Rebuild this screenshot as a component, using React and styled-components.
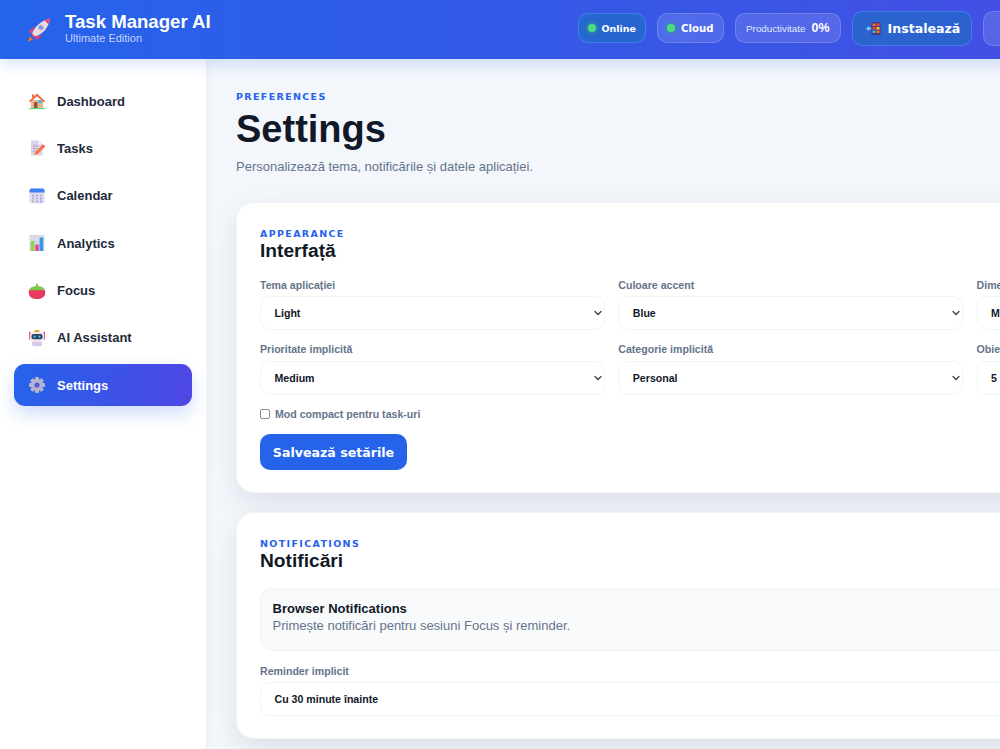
import React from "react";
import styled, { createGlobalStyle } from "styled-components";
import { ChevronDown } from "lucide-react";

const Global = createGlobalStyle`
  html, body { margin: 0; padding: 0; height: 749px; overflow: hidden; background: #f3f6fb; }
  * { box-sizing: border-box; }
  #root { font-family: "Liberation Sans", Arial, sans-serif; }
`;
const Shell = styled.div`width: 1400px; height: 749px; display: flex; flex-direction: column; overflow: hidden; background: #f3f6fb;`;
const Header = styled.header`
  height: 59px; flex: none; display: flex; align-items: center; padding: 0 24px 0 26px;
  background: linear-gradient(90deg,#2563eb 0%,#3b55e6 55%,#4f46e5 100%);
  box-shadow: 0 4px 16px rgba(37,99,235,.2); position: relative; z-index: 2;
`;
const Brand = styled.div`display: flex; align-items: center; gap: 13px; width: 552px; flex: none;`;
const BrandText = styled.div`display: flex; flex-direction: column; color: #fff;`;
const BrandTitle = styled.div`font: 700 18.6px/20px "Liberation Sans", Arial, sans-serif; white-space: nowrap; margin-top: -3px;`;
const BrandSub = styled.div`font: 400 11px/13px "Liberation Sans", Arial, sans-serif; color: #c7d2fe;`;
const Actions = styled.div`display: flex; align-items: center; gap: 11px; margin-bottom: 3px;`;
const Pill = styled.div`
  height: 30px; display: flex; align-items: center; gap: 6px; padding: 0 ${p => p.$pad || 8.5}px; border-radius: 10px; color: #fff; flex: none;
  background: ${p => p.$teal ? "rgba(20,120,180,.45)" : "rgba(255,255,255,.12)"};
  border: 1px solid ${p => p.$teal ? "rgba(96,165,250,.45)" : "rgba(255,255,255,.16)"};
`;
const Dot = styled.span`width: 8px; height: 8px; border-radius: 50%; background: #4ade80; box-shadow: 0 0 4px #22c55e;`;
const PillText = styled.span`font: 700 ${p => p.$size || 9.5}px "DejaVu Sans", sans-serif; white-space: nowrap;`;
const ProdLabel = styled.span`font: 400 9.8px "Liberation Sans", Arial, sans-serif; color: #e0e7ff; white-space: nowrap;`;
const ProdValue = styled.span`font: 700 12.5px "Liberation Sans", Arial, sans-serif;`;
const InstallBtn = styled(Pill)`height: 35px; padding: 0 11px 0 13px; gap: 7px;`;
const Ghost = styled(Pill)`width: 60px; height: 35px;`;
const Body = styled.div`display: flex; flex: 1; min-height: 0;`;
const Sidebar = styled.aside`
  width: 207px; flex: none; background: #fff; padding: 21px 14px; display: flex; flex-direction: column; gap: 5.4px;
  border-right: 1px solid #eef2f7; box-shadow: 2px 0 10px rgba(15,23,42,.03);
`;
const NavItem = styled.div`
  height: 42px; display: flex; align-items: center; gap: 11px; padding: 0 14px; border-radius: 11px;
  font: 700 13px "Liberation Sans", Arial, sans-serif; color: ${p => p.$active ? "#fff" : "#1e293b"};
  background: ${p => p.$active ? "linear-gradient(100deg,#2563eb,#4f46e5)" : "transparent"};
  box-shadow: ${p => p.$active ? "0 8px 18px rgba(37,99,235,.22)" : "none"};
`;
const Main = styled.main`flex: 1; padding: 32px 30px 0 29px; min-width: 0;`;
const Eyebrow = styled.div`font: 700 9.5px/11px "DejaVu Sans", sans-serif; letter-spacing: 1.35px; color: #2563eb; text-transform: uppercase;`;
const PageTitle = styled.h1`margin: 4px 0 0; font: 700 38px/46px "Liberation Sans", Arial, sans-serif; color: #111827;`;
const PageSub = styled.p`margin: 6px 0 0; font: 400 13px/18px "Liberation Sans", Arial, sans-serif; color: #64748b;`;
const Card = styled.section`
  background: #fff; border-radius: 18px; padding: 24.5px 23px 22px; margin-top: ${p => p.$mt}px;
  box-shadow: 0 10px 28px rgba(15,23,42,.09); border: 1px solid #f1f5f9;
`;
const CardTitle = styled.h2`margin: 0; font: 700 19.2px/24px "Liberation Sans", Arial, sans-serif; color: #111827;`;
const Grid = styled.div`display: grid; grid-template-columns: repeat(3, 345px); column-gap: 13.3px; row-gap: 12px; margin-top: 15px;`;
const Field = styled.label`display: flex; flex-direction: column; gap: 4.5px;`;
const Label = styled.span`font: 700 10.6px/14px "Liberation Sans", Arial, sans-serif; color: #64748b; white-space: nowrap;`;
const Select = styled.div`
  height: 34px; border-radius: 10px; border: 1px solid #f1f5f9; background: #fff; display: flex; align-items: center; justify-content: space-between;
  padding: 0 0 0 13.5px; font: 700 10.6px "Liberation Sans", Arial, sans-serif; color: #111827; white-space: nowrap;
`;
const CheckRow = styled.div`display: flex; align-items: center; gap: 5px; margin-top: 12.5px; font: 700 10.6px/14px "Liberation Sans", Arial, sans-serif; color: #64748b;`;
const Box = styled.span`width: 10px; height: 10px; border: 1px solid #8b8f96; border-radius: 2px; background: #fff;`;
const SaveBtn = styled.button`
  display: block; margin-top: 13px; width: 147px; height: 36px; border: 0; border-radius: 10px; background: #2563eb; color: #fff;
  font: 700 12.6px "DejaVu Sans", sans-serif;
`;
const Notice = styled.div`margin-top: 15px; height: 63px; border-radius: 12px; background: #f8fafc; border: 1px solid #f1f5f9; padding: 12px 11.5px;`;
const NoticeTitle = styled.div`font: 700 13px/16px "Liberation Sans", Arial, sans-serif; color: #111827;`;
const NoticeSub = styled.div`font: 400 13px/18px "Liberation Sans", Arial, sans-serif; color: #64748b;`;
const FullField = styled(Field)`margin-top: 13px;`;

const Rocket = () => (
  <svg width="26" height="26" viewBox="0 0 26 26">
    <path d="M4 19.5L1.5 24.5l5.5-1.8z" fill="#f97316" />
    <path d="M8 9.5L2.5 15.5l4 .5zM16.5 18l-6.5 5.5-.5-4z" fill="#f43f5e" />
    <path d="M6 17C8 10 15 3.5 24 1.5c-1 9-7.5 16-15 18z" fill="#e9dcdf" />
    <path d="M18.5 3.3L24 1.5c-.3 2-1 4-1.7 5.8z" fill="#f43f5e" />
    <circle cx="15" cy="10.5" r="2.5" fill="#60a5fa" stroke="#f1a9b5" />
    <path d="M6 16.5l3.5 3.5-2 .5-2-2z" fill="#f43f5e" />
  </svg>
);
const PhoneArrow = () => (
  <svg width="15" height="15" viewBox="0 0 15 15">
    <path d="M0 7.5L3 5v1.5h2v2H3V10z" fill="#7dd3fc" />
    <rect x="5.5" y="1" width="9" height="13" rx="1" fill="#4c3a78" />
    <rect x="6.5" y="2.5" width="3" height="2.5" fill="#f97316" />
    <rect x="10.5" y="2.5" width="3" height="2.5" fill="#ef4444" />
    <rect x="6.5" y="6" width="3" height="2.5" fill="#ef4444" />
    <rect x="10.5" y="6" width="3" height="2.5" fill="#facc15" />
    <rect x="6.5" y="9.5" width="3" height="2.5" fill="#38bdf8" />
    <rect x="10.5" y="9.5" width="3" height="2.5" fill="#f97316" />
  </svg>
);
const House = () => (
  <svg width="18" height="18" viewBox="0 0 18 18">
    <path d="M3 8h12v8H3z" fill="#e8b48a" />
    <path d="M.8 9.2L9 1.5l8.2 7.7-1.5 1L9 4.3 2.3 10.2z" fill="#ef6b3f" />
    <path d="M4 2.5h2v2l-2 1.8z" fill="#ef6b3f" />
    <rect x="6" y="10" width="3.4" height="6" fill="#8d5a3c" />
    <rect x="10.5" y="8" width="3.2" height="3.2" fill="#38bdf8" />
    <path d="M1 16.6h16" stroke="#4ade80" strokeWidth="1.1" />
  </svg>
);
const Memo = () => (
  <svg width="18" height="18" viewBox="0 0 18 18">
    <path d="M3 1.5h7.5l4 4V16.5H3z" fill="#ddd3e6" />
    <path d="M10.5 1.5v4h4z" fill="#f3eef6" />
    <path d="M5 7h5M5 9.5h4M5 12h2.5" stroke="#a79bb5" strokeWidth=".9" />
    <path d="M6.5 16l.8-3 6.7-6.7 2.2 2.2-6.7 6.7z" fill="#f97340" />
    <path d="M14 6.3l1-1 2.2 2.2-1 1z" fill="#f43f5e" />
  </svg>
);
const Cal = () => (
  <svg width="18" height="18" viewBox="0 0 18 18">
    <rect x="1.5" y="1.5" width="15" height="15" rx="2" fill="#e3daf2" />
    <path d="M1.5 3.5a2 2 0 012-2h11a2 2 0 012 2v2h-15z" fill="#3b82f6" />
    <g fill="#a59fbd">
      <circle cx="5" cy="8.5" r=".9"/><circle cx="9" cy="8.5" r=".9"/><circle cx="13" cy="8.5" r=".9"/>
      <circle cx="5" cy="11.5" r=".9"/><circle cx="9" cy="11.5" r=".9"/><circle cx="13" cy="11.5" r=".9" fill="#60a5fa"/>
      <circle cx="5" cy="14.5" r=".9"/><circle cx="9" cy="14.5" r=".9"/><circle cx="13" cy="14.5" r=".9" fill="#60a5fa"/>
    </g>
  </svg>
);
const Chart = () => (
  <svg width="18" height="18" viewBox="0 0 18 18">
    <rect x="1.5" y="1" width="15" height="16" rx="1" fill="#dcd8e4" />
    <rect x="2.8" y="7" width="3.6" height="10" fill="#86d64f" />
    <rect x="7.2" y="10.5" width="3.6" height="6.5" fill="#ec4899" />
    <rect x="11.6" y="3.5" width="3.6" height="13.5" fill="#2f9be8" />
  </svg>
);
const Tomato = () => (
  <svg width="18" height="18" viewBox="0 0 18 18">
    <path d="M9 5C14 4 17.5 7 17.3 11c-.2 4-4 6-8.3 6S.9 15 .7 11C.5 7 4 4 9 5z" fill="#e8395f" />
    <path d="M1.5 7.5C3 5 5.5 4.3 8 4.3V1.8h2v2.5c2.5 0 5 .7 6.5 3.2-1.5 1.2-3 1-4.2.3-1 1-2.300 1-3.300.3-1 .7-2.300.7-3.300-.3-1.200.7-2.700.9-4.200-.3z" fill="#7cc84a" />
  </svg>
);
const Robot = () => (
  <svg width="18" height="18" viewBox="0 0 18 18">
    <path d="M1 2l2.5 2.5v6H1zM17 2l-2.5 2.5v6H17z" fill="#f0568f" />
    <rect x="2" y="2.8" width="14" height="10" rx="3.5" fill="#f0e6f5" />
    <rect x="3.5" y="5" width="11" height="5.2" rx="2" fill="#33415c" />
    <circle cx="6.6" cy="7.6" r="1.2" fill="#38bdf8" /><circle cx="11.4" cy="7.6" r="1.2" fill="#38bdf8" />
    <rect x="4" y="12.5" width="10" height="4.8" rx="2" fill="#dcc9f0" />
    <rect x="6.5" y="1" width="5" height="2" rx="1" fill="#f59e0b" />
  </svg>
);
const Gear = () => (
  <svg width="18" height="18" viewBox="0 0 18 18">
    <g fill="#b6b4cf">
      {[0,45,90,135].map(a => <rect key={a} x="7" y="1" width="4" height="16" rx="1" transform={`rotate(${a} 9 9)`} />)}
      <circle cx="9" cy="9" r="6" />
    </g>
    <circle cx="9" cy="9" r="2.6" fill="#5a58dc" />
  </svg>
);

const nav = [
  ["Dashboard", House], ["Tasks", Memo], ["Calendar", Cal], ["Analytics", Chart],
  ["Focus", Tomato], ["AI Assistant", Robot], ["Settings", Gear],
];
const fields = [
  ["Tema aplicației", "Light"], ["Culoare accent", "Blue"], ["Dimensiune font", "Medium"],
  ["Prioritate implicită", "Medium"], ["Categorie implicită", "Personal"], ["Obiectiv zilnic", "5"],
];

export default function App() {
  return (
    <Shell>
      <Global />
      <Header>
        <Brand>
          <Rocket />
          <BrandText>
            <BrandTitle>Task Manager AI</BrandTitle>
            <BrandSub>Ultimate Edition</BrandSub>
          </BrandText>
        </Brand>
        <Actions>
          <Pill $teal><Dot /><PillText>Online</PillText></Pill>
          <Pill $pad={9.5}><Dot /><PillText $size={10.2}>Cloud</PillText></Pill>
          <Pill $pad={10}><ProdLabel>Productivitate</ProdLabel><ProdValue>0%</ProdValue></Pill>
          <InstallBtn $teal><PhoneArrow /><PillText $size={12.6}>Instalează</PillText></InstallBtn>
          <Ghost />
        </Actions>
      </Header>
      <Body>
        <Sidebar>
          {nav.map(([t, I]) => <NavItem key={t} $active={t === "Settings"}><I />{t}</NavItem>)}
        </Sidebar>
        <Main>
          <Eyebrow>Preferences</Eyebrow>
          <PageTitle>Settings</PageTitle>
          <PageSub>Personalizează tema, notificările și datele aplicației.</PageSub>
          <Card $mt={26}>
            <Eyebrow>Appearance</Eyebrow>
            <CardTitle>Interfață</CardTitle>
            <Grid>
              {fields.map(([l, v]) => (
                <Field key={l}>
                  <Label>{l}</Label>
                  <Select>{v}<ChevronDown size={12} strokeWidth={2.6} color="#374151" /></Select>
                </Field>
              ))}
            </Grid>
            <CheckRow><Box />Mod compact pentru task-uri</CheckRow>
            <SaveBtn>Salvează setările</SaveBtn>
          </Card>
          <Card $mt={19}>
            <Eyebrow>Notifications</Eyebrow>
            <CardTitle>Notificări</CardTitle>
            <Notice>
              <NoticeTitle>Browser Notifications</NoticeTitle>
              <NoticeSub>Primește notificări pentru sesiuni Focus și reminder.</NoticeSub>
            </Notice>
            <FullField>
              <Label>Reminder implicit</Label>
              <Select>Cu 30 minute înainte</Select>
            </FullField>
          </Card>
        </Main>
      </Body>
    </Shell>
  );
}
